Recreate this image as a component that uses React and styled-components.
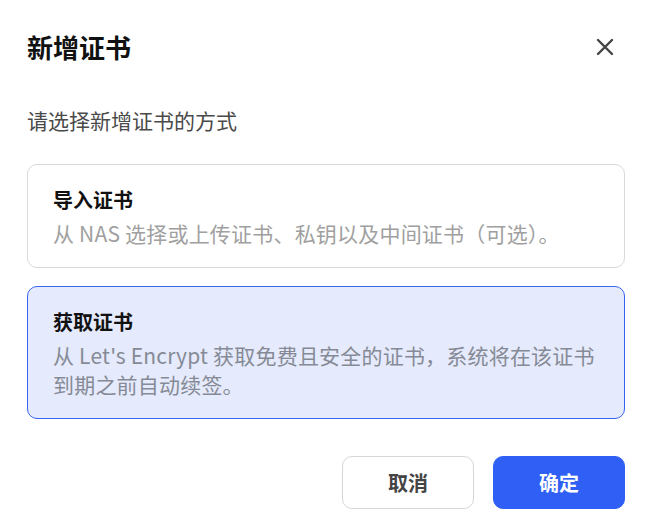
import React, { useState } from 'react';
import styled, { createGlobalStyle } from 'styled-components';

const GlobalStyle = createGlobalStyle`
  html, body {
    margin: 0;
    padding: 0;
    background: #ffffff;
  }
  body {
    font-family: "Noto Sans CJK SC", "Noto Sans", "Liberation Sans", sans-serif;
  }
`;

const Dialog = styled.div`
  display: flex;
  flex-direction: column;
  width: 660px;
  height: 531px;
  box-sizing: border-box;
  padding: 30px 35px 0 27px;
  background: #ffffff;
`;

const Header = styled.div`
  display: flex;
  align-items: center;
  justify-content: space-between;
  height: 34px;
`;

const Title = styled.h1`
  margin: 0;
  font-size: 26px;
  line-height: 34px;
  font-weight: 700;
  color: #111111;
`;

const CloseButton = styled.button`
  display: flex;
  align-items: center;
  justify-content: center;
  width: 28px;
  height: 28px;
  margin-right: 6px;
  padding: 0;
  border: none;
  background: transparent;
  cursor: pointer;
`;

const Subtitle = styled.p`
  margin: 41px 0 29px;
  font-size: 21px;
  line-height: 30px;
  color: #4a4a4a;
`;

const Options = styled.div`
  display: flex;
  flex-direction: column;
  gap: 18px;
`;

const Card = styled.div`
  display: flex;
  flex-direction: column;
  gap: 4px;
  box-sizing: border-box;
  padding: 20px 22px 19px 25px;
  border: 1px solid ${({ selected }) => (selected ? '#3864f2' : '#d9d9d9')};
  border-radius: 10px;
  background: ${({ selected }) => (selected ? '#e5eafc' : '#ffffff')};
  cursor: pointer;
`;

const CardTitle = styled.div`
  font-size: 20px;
  line-height: 30px;
  font-weight: 700;
  color: #111111;
`;

const CardText = styled.div`
  font-size: 21px;
  line-height: 29px;
  letter-spacing: 0.2px;
  color: ${({ selected }) => (selected ? '#858a96' : '#a0a0a0')};
`;

const Footer = styled.div`
  display: flex;
  justify-content: flex-end;
  gap: 19px;
  margin-top: 37px;
`;

const Button = styled.button`
  width: 132px;
  height: 53px;
  box-sizing: border-box;
  border-radius: 10px;
  border: 1px solid ${({ primary }) => (primary ? '#2f5ff5' : '#d6d6d6')};
  background: ${({ primary }) => (primary ? '#2f5ff5' : '#ffffff')};
  color: ${({ primary }) => (primary ? '#ffffff' : '#444444')};
  font-family: inherit;
  font-size: 20px;
  font-weight: 700;
  cursor: pointer;
`;

const options = [
  {
    id: 'import',
    title: '导入证书',
    text: '从 NAS 选择或上传证书、私钥以及中间证书（可选）。',
  },
  {
    id: 'acquire',
    title: '获取证书',
    text: "从 Let's Encrypt 获取免费且安全的证书，系统将在该证书到期之前自动续签。",
  },
];

function CloseIcon() {
  return (
    <svg width="18" height="18" viewBox="0 0 18 18" fill="none">
      <path
        d="M2 2L16 16M16 2L2 16"
        stroke="#444444"
        strokeWidth="2.4"
        strokeLinecap="round"
      />
    </svg>
  );
}

export default function App() {
  const [selected, setSelected] = useState('acquire');
  return (
    <>
      <GlobalStyle />
      <Dialog>
        <Header>
          <Title>新增证书</Title>
          <CloseButton aria-label="关闭">
            <CloseIcon />
          </CloseButton>
        </Header>
        <Subtitle>请选择新增证书的方式</Subtitle>
        <Options>
          {options.map(opt => (
            <Card
              key={opt.id}
              selected={opt.id === selected}
              onClick={() => setSelected(opt.id)}
            >
              <CardTitle>{opt.title}</CardTitle>
              <CardText selected={opt.id === selected}>{opt.text}</CardText>
            </Card>
          ))}
        </Options>
        <Footer>
          <Button>取消</Button>
          <Button primary>确定</Button>
        </Footer>
      </Dialog>
    </>
  );
}
